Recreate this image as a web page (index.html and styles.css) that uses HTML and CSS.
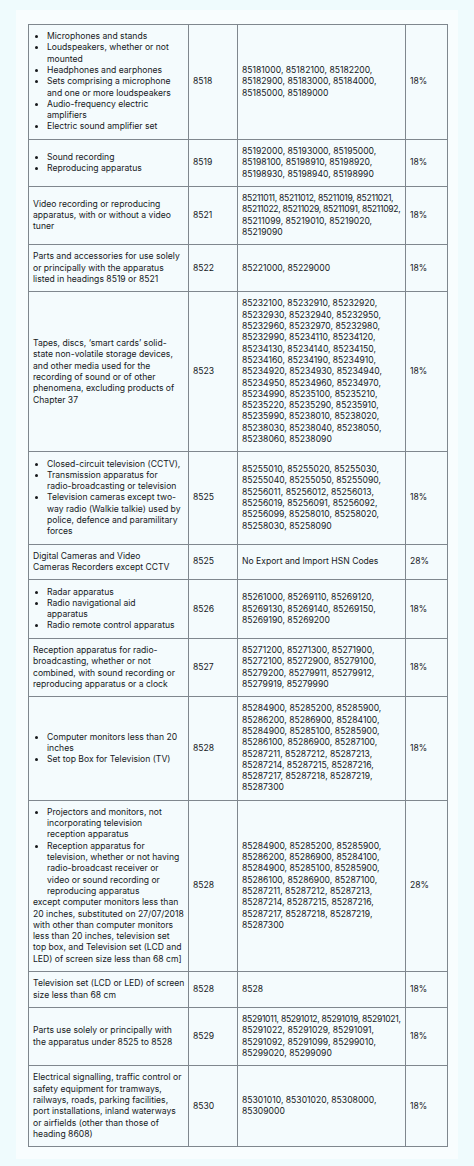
FILE: index.html
```html
<!DOCTYPE html>
<html>
<head>
<meta charset="utf-8">
<link rel="stylesheet" href="styles.css">
</head>
<body>
<div class="card">
<table class="hsn">
<colgroup><col class="c-desc"><col class="c-head"><col class="c-codes"><col class="c-rate"></colgroup>
<tbody>
<tr>
<td><ul><li>Microphones and stands</li><li>Loudspeakers, whether or not<br>mounted</li><li>Headphones and earphones</li><li>Sets comprising a microphone<br>and one or more loudspeakers</li><li>Audio-frequency electric<br>amplifiers</li><li>Electric sound amplifier set</li></ul></td>
<td>8518</td>
<td>85181000, 85182100, 85182200,<br>85182900, 85183000, 85184000,<br>85185000, 85189000</td>
<td>18%</td>
</tr>
<tr>
<td><ul><li>Sound recording</li><li>Reproducing apparatus</li></ul></td>
<td>8519</td>
<td>85192000, 85193000, 85195000,<br>85198100, 85198910, 85198920,<br>85198930, 85198940, 85198990</td>
<td>18%</td>
</tr>
<tr>
<td>Video recording or reproducing<br>apparatus, with or without a video<br>tuner</td>
<td>8521</td>
<td><span class="tight">85211011, 85211012, 85211019, 85211021,</span><br><span class="tight">85211022, 85211029, 85211091, 85211092,</span><br>85211099, 85219010, 85219020,<br>85219090</td>
<td>18%</td>
</tr>
<tr>
<td>Parts and accessories for use solely<br>or principally with the apparatus<br>listed in headings 8519 or 8521</td>
<td>8522</td>
<td>85221000, 85229000</td>
<td>18%</td>
</tr>
<tr>
<td>Tapes, discs, ‘smart cards’ solid-<br>state non-volatile storage devices,<br>and other media used for the<br>recording of sound or of other<br>phenomena, excluding products of<br>Chapter 37</td>
<td>8523</td>
<td>85232100, 85232910, 85232920,<br>85232930, 85232940, 85232950,<br>85232960, 85232970, 85232980,<br>85232990, 85234110, 85234120,<br>85234130, 85234140, 85234150,<br>85234160, 85234190, 85234910,<br>85234920, 85234930, 85234940,<br>85234950, 85234960, 85234970,<br>85234990, 85235100, 85235210,<br>85235220, 85235290, 85235910,<br>85235990, 85238010, 85238020,<br>85238030, 85238040, 85238050,<br>85238060, 85238090</td>
<td>18%</td>
</tr>
<tr>
<td><ul><li>Closed-circuit television (CCTV),</li><li>Transmission apparatus for<br>radio-broadcasting or television</li><li>Television cameras except two-<br>way radio (Walkie talkie) used by<br>police, defence and paramilitary<br>forces</li></ul></td>
<td>8525</td>
<td>85255010, 85255020, 85255030,<br>85255040, 85255050, 85255090,<br>85256011, 85256012, 85256013,<br>85256019, 85256091, 85256092,<br>85256099, 85258010, 85258020,<br>85258030, 85258090</td>
<td>18%</td>
</tr>
<tr>
<td>Digital Cameras and Video<br>Cameras Recorders except CCTV</td>
<td>8525</td>
<td>No Export and Import HSN Codes</td>
<td>28%</td>
</tr>
<tr>
<td><ul><li>Radar apparatus</li><li>Radio navigational aid<br>apparatus</li><li>Radio remote control apparatus</li></ul></td>
<td>8526</td>
<td>85261000, 85269110, 85269120,<br>85269130, 85269140, 85269150,<br>85269190, 85269200</td>
<td>18%</td>
</tr>
<tr>
<td>Reception apparatus for radio-<br>broadcasting, whether or not<br>combined, with sound recording or<br>reproducing apparatus or a clock</td>
<td>8527</td>
<td>85271200, 85271300, 85271900,<br>85272100, 85272900, 85279100,<br>85279200, 85279911, 85279912,<br>85279919, 85279990</td>
<td>18%</td>
</tr>
<tr>
<td><ul><li>Computer monitors less than 20<br>inches</li><li>Set top Box for Television (TV)</li></ul></td>
<td>8528</td>
<td>85284900, 85285200, 85285900,<br>85286200, 85286900, 85284100,<br>85284900, 85285100, 85285900,<br>85286100, 85286900, 85287100,<br>85287211, 85287212, 85287213,<br>85287214, 85287215, 85287216,<br>85287217, 85287218, 85287219,<br>85287300</td>
<td>18%</td>
</tr>
<tr>
<td><ul><li>Projectors and monitors, not<br>incorporating television<br>reception apparatus</li><li>Reception apparatus for<br>television, whether or not having<br>radio-broadcast receiver or<br>video or sound recording or<br>reproducing apparatus</li></ul>except computer monitors less than<br>20 inches, substituted on 27/07/2018<br>with other than computer monitors<br>less than 20 inches, television set<br>top box, and Television set (LCD and<br>LED) of screen size less than 68 cm]</td>
<td>8528</td>
<td>85284900, 85285200, 85285900,<br>85286200, 85286900, 85284100,<br>85284900, 85285100, 85285900,<br>85286100, 85286900, 85287100,<br>85287211, 85287212, 85287213,<br>85287214, 85287215, 85287216,<br>85287217, 85287218, 85287219,<br>85287300</td>
<td>28%</td>
</tr>
<tr>
<td>Television set (LCD or LED) of screen<br>size less than 68 cm</td>
<td>8528</td>
<td>8528</td>
<td>18%</td>
</tr>
<tr>
<td>Parts use solely or principally with<br>the apparatus under 8525 to 8528</td>
<td>8529</td>
<td><span class="tight">85291011, 85291012, 85291019, 85291021,</span><br>85291022, 85291029, 85291091,<br>85291092, 85291099, 85299010,<br>85299020, 85299090</td>
<td>18%</td>
</tr>
<tr>
<td>Electrical signalling, traffic control or<br>safety equipment for tramways,<br>railways, roads, parking facilities,<br>port installations, inland waterways<br>or airfields (other than those of<br>heading 8608)</td>
<td>8530</td>
<td>85301010, 85301020, 85308000,<br>85309000</td>
<td>18%</td>
</tr>
</tbody>
</table>
</div>
</body>
</html>
```
FILE: styles.css
```css
html, body {
  margin: 0;
  padding: 0;
  background: #effbfd;
}
body {
  padding: 10px 16px 9px 16px;
  font-family: Inter, "Open Sans", "Liberation Sans", sans-serif;
  color: #16191c;
}
.card {
  background: #f8fdfe;
  padding: 14px 11px 12px 12px;
}
.hsn {
  border-collapse: collapse;
  table-layout: fixed;
  width: 419px;
  background: #f4fbfd;
  font-size: 8.6px;
  line-height: 11.3px;
}
.c-desc { width: 160px; }
.c-head { width: 49px; }
.c-codes { width: 168px; }
.c-rate { width: 42px; }
.hsn td {
  border: 1.5px solid #7f878e;
  padding: 6.1px 4px;
  vertical-align: middle;
  white-space: nowrap;
  overflow: hidden;
}
.hsn ul {
  margin: 0;
  padding: 0 0 0 14px;
}
.hsn li {
  padding: 0;
}
.tight {
  letter-spacing: -0.3px;
}
```
